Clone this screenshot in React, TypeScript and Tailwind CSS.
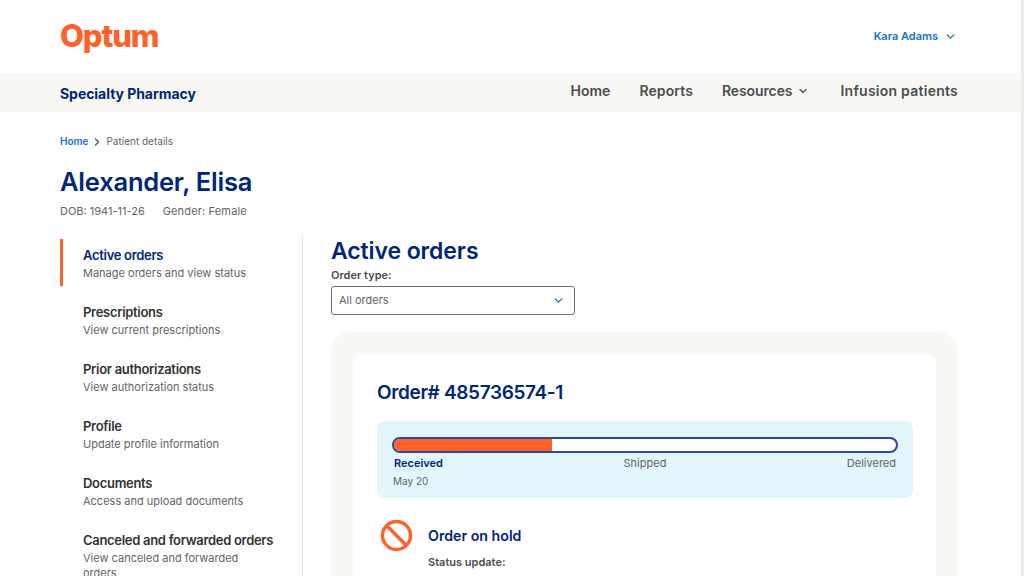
import React from 'react';
import { ChevronDown, ChevronRight } from 'lucide-react';

const sideItems = [
  { title: 'Active orders', text: 'Manage orders and view status', active: true },
  { title: 'Prescriptions', text: 'View current prescriptions' },
  { title: 'Prior authorizations', text: 'View authorization status' },
  { title: 'Profile', text: 'Update profile information' },
  { title: 'Documents', text: 'Access and upload documents' },
  { title: 'Canceled and forwarded orders', text: 'View canceled and forwarded orders' },
];

const SideItem = ({ title, text, active }: { title: string; text: string; active?: boolean }) => (
  <div className={`h-[47px] pl-[20px] border-l-[3px] pt-[7px] ${active ? 'border-[#FF612B]' : 'border-transparent'}`}>
    <div className={`text-[13px] leading-[18px] font-semibold tracking-[-0.3px] ${active ? 'text-[#002677]' : 'text-[#323334]'}`}>{title}</div>
    <div className="mt-[2px] text-[11px] leading-[15px] text-[#636466] w-[190px]">{text}</div>
  </div>
);

export default function App() {
  return (
    <div className="w-[1024px] h-[576px] overflow-hidden flex bg-white font-['Inter',sans-serif]">
      <div className="w-[1021px] h-full flex flex-col">
        <header className="h-[73px] shrink-0 pl-[60px] pr-[64px] flex items-center justify-between">
          <div className="text-[#FF612B] text-[31px] leading-none font-extrabold tracking-[-1.1px] -mt-[3px]">Optum</div>
          <div className="flex items-center gap-[6px] text-[#196ECF] text-[11px] font-semibold">
            Kara Adams
            <ChevronDown size={13} strokeWidth={2.5} />
          </div>
        </header>

        <nav className="h-[39px] shrink-0 bg-[#F9F8F4] pl-[60px] pr-[63px] flex items-center justify-between">
          <div className="text-[#002677] text-[14px] font-bold tracking-[-0.05px] mt-[1px]">Specialty Pharmacy</div>
          <div className="flex items-center text-[#4B4D4F] text-[14px] font-semibold tracking-[-0.1px] -mt-[4px]">
            <span className="tracking-[0px]">Home</span>
            <span className="ml-[29px] tracking-[0.1px]">Reports</span>
            <span className="ml-[29px] flex items-center gap-[5px]">
              Resources
              <ChevronDown size={12} strokeWidth={2.5} />
            </span>
            <span className="ml-[31px] tracking-[0.25px]">Infusion patients</span>
          </div>
        </nav>

        <main className="flex-1 min-h-0 pl-[60px] pr-[63px] pt-[23px]">
          <div className="flex items-center h-[13px] text-[10px]">
            <span className="text-[#196ECF] font-semibold">Home</span>
            <ChevronRight size={12} strokeWidth={2.5} className="text-[#4B4D4F] mx-[3px]" />
            <span className="text-[#636466]">Patient details</span>
          </div>
          <h1 className="mt-[19px] text-[#002677] text-[25.5px] leading-[30px] font-semibold tracking-[-0.2px]">Alexander, Elisa</h1>
          <div className="mt-[7px] flex text-[11px] leading-[15px] text-[#636466]">
            <span>DOB: 1941-11-26</span>
            <span className="ml-[18px] tracking-[0.15px]">Gender: Female</span>
          </div>

          <div className="mt-[16px] flex">
            <aside className="w-[243px] shrink-0 border-r border-[#E5E5E6] h-[360px] pt-[4px] flex flex-col gap-[10px]">
              {sideItems.map((item) => (
                <SideItem key={item.title} {...item} />
              ))}
            </aside>

            <section className="ml-[28px] flex-1 min-w-0 pt-[1px]">
              <h2 className="text-[#002677] text-[23px] leading-[30px] font-semibold tracking-[-0.1px]">Active orders</h2>
              <div className="mt-[2px] text-[11px] leading-[15px] font-semibold text-[#4B4D4F]">Order type:</div>
              <div className="mt-[3px] w-[244px] h-[29px] rounded-[3px] border border-[#6D6F70] flex items-center justify-between pl-[7px] pr-[9px] text-[11px] text-[#636466]">
                All orders
                <ChevronDown size={13} strokeWidth={2.5} className="text-[#196ECF]" />
              </div>

              <div className="mt-[17px] bg-[#F9F8F4] rounded-t-[20px] pt-[22px] px-[22px] h-[300px]">
                <div className="bg-white rounded-t-[8px] h-full pt-[27px] pl-[24px] pr-[23px]">
                  <h3 className="text-[#002677] text-[19px] leading-[24px] font-semibold tracking-[-0.35px]">Order# 485736574-1</h3>
                  <div className="mt-[16px] bg-[#E3F6FB] rounded-[8px] h-[77px] pt-[16px] px-[15px]">
                    <div className="h-[16px] rounded-full border-[2px] border-[#2B4B94] bg-white overflow-hidden">
                      <div className="h-full w-[158px] bg-[#FF612B]" />
                    </div>
                    <div className="mt-[3px] grid grid-cols-3 text-[11px] leading-[15px]">
                      <span className="font-semibold text-[#002677] pl-[2px]">Received</span>
                      <span className="text-center text-[#636466]">Shipped</span>
                      <span className="text-right text-[#636466] pr-[2px]">Delivered</span>
                    </div>
                    <div className="mt-[3px] pl-[1px] text-[10px] leading-[14px] text-[#636466]">May 20</div>
                  </div>
                  <div className="mt-[21px] flex">
                    <svg width="33" height="33" viewBox="0 0 33 33" fill="none" stroke="#FF612B" strokeWidth="3.4" className="shrink-0 ml-[3px]">
                      <circle cx="16.5" cy="16.5" r="14" />
                      <path d="M6.8 6.8 26.2 26.2" />
                    </svg>
                    <div className="ml-[15px] pt-[7px]">
                      <div className="text-[#002677] text-[14.2px] leading-[20px] font-semibold">Order on hold</div>
                      <div className="mt-[9px] text-[11px] leading-[15px] font-semibold text-[#4B4D4F]">Status update:</div>
                    </div>
                  </div>
                </div>
              </div>
            </section>
          </div>
        </main>
      </div>
      <div className="w-[3px] h-full bg-[#ECECEC]" />
    </div>
  );
}
